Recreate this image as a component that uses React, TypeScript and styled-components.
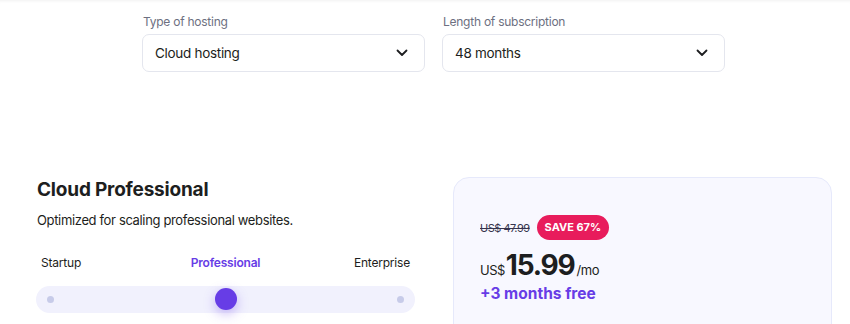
import styled, { createGlobalStyle } from "styled-components";

const GlobalStyle = createGlobalStyle`
  body {
    margin: 0;
    background: #ffffff;
    font-family: Inter, "Noto Sans", sans-serif;
    color: #1d1e20;
  }
`;

const Page = styled.div`
  width: 850px;
  height: 324px;
  overflow: hidden;
  box-shadow: inset 0 3px 3px -2px rgba(0, 0, 0, 0.06);
`;

const Filters = styled.div`
  display: flex;
  gap: 17px;
  padding: 14px 0 0 142px;
`;

const Field = styled.div`
  width: 283px;
  display: flex;
  flex-direction: column;
  gap: 4px;
`;

const Label = styled.span`
  font-size: 12px;
  letter-spacing: -0.25px;
  color: #6d7081;
  padding-left: 1px;
  line-height: 16px;
`;

const Select = styled.div`
  height: 38px;
  box-sizing: border-box;
  border: 1px solid #e4e6ee;
  border-radius: 7px;
  display: flex;
  align-items: center;
  justify-content: space-between;
  padding: 0 16px 0 12px;
  font-size: 13.5px;
  letter-spacing: -0.3px;
  color: #1d1e20;
`;

const Plan = styled.div`
  display: flex;
  gap: 38px;
  padding: 106px 0 0 36px;
`;

const Info = styled.div`
  width: 379px;
`;

const Title = styled.h2`
  margin: 0 0 0 1px;
  font-size: 19px;
  font-weight: 700;
  line-height: 24px;
  letter-spacing: -0.2px;
`;

const Subtitle = styled.p`
  margin: 9px 0 0 1px;
  font-size: 13px;
  letter-spacing: -0.35px;
  line-height: 18px;
  color: #1d1e20;
`;

const Tiers = styled.div`
  display: grid;
  grid-template-columns: 1fr auto 1fr;
  padding: 0 5px;
  margin-top: 26px;
`;

const Tier = styled.span<{ $active?: boolean; $align?: string }>`
  font-size: 12px;
  line-height: 16px;
  letter-spacing: -0.2px;
  text-align: ${(p) => p.$align || "center"};
  font-weight: ${(p) => (p.$active ? 600 : 400)};
  color: ${(p) => (p.$active ? "#673de6" : "#1d1e20")};
`;

const Track = styled.div`
  position: relative;
  margin-top: 15px;
  height: 27px;
  border-radius: 14px;
  background: #f1f1fd;
  display: flex;
  align-items: center;
  justify-content: space-between;
  padding: 0 11px;
`;

const Dot = styled.span`
  width: 7px;
  height: 7px;
  border-radius: 50%;
  background: #c7cbe9;
`;

const Thumb = styled.span`
  position: absolute;
  left: 179px;
  top: 2px;
  width: 22px;
  height: 22px;
  border-radius: 50%;
  background: #673de6;
  box-shadow: 0 4px 12px rgba(103, 61, 230, 0.35);
`;

const Card = styled.div`
  width: 379px;
  height: 180px;
  box-sizing: border-box;
  margin-top: -1px;
  border: 1px solid #e6e9fb;
  border-radius: 16px;
  background: #f8f8ff;
  padding: 37px 26px;
`;

const OldRow = styled.div`
  display: flex;
  align-items: center;
  gap: 7px;
`;

const OldPrice = styled.s`
  font-size: 11px;
  letter-spacing: -0.5px;
  color: #36344d;
`;

const Badge = styled.span`
  background: #e81c5c;
  color: #ffffff;
  font-size: 11px;
  font-weight: 700;
  line-height: 25px;
  padding: 0 8px;
  border-radius: 13px;
`;

const PriceRow = styled.div`
  display: flex;
  align-items: baseline;
  margin-top: 8px;
  height: 36px;
`;

const Currency = styled.span`
  font-size: 13px;
  letter-spacing: -0.5px;
  margin-right: 1px;
`;

const Amount = styled.span`
  font-size: 28px;
  font-weight: 700;
  letter-spacing: -1.2px;
`;

const Per = styled.span`
  font-size: 13px;
  letter-spacing: -0.4px;
  margin-left: 2px;
`;

const Free = styled.div`
  color: #673de6;
  font-size: 15.5px;
  font-weight: 700;
  line-height: 20px;
`;

const Chevron = () => (
  <svg width="12" height="8" viewBox="0 0 12 8" fill="none">
    <path d="M1.5 1.5L6 6l4.5-4.5" stroke="#1d1e20" strokeWidth="1.8" strokeLinecap="round" strokeLinejoin="round" />
  </svg>
);

export default function App() {
  return (
    <Page>
      <GlobalStyle />
      <Filters>
        <Field>
          <Label>Type of hosting</Label>
          <Select>
            Cloud hosting
            <Chevron />
          </Select>
        </Field>
        <Field>
          <Label>Length of subscription</Label>
          <Select>
            48 months
            <Chevron />
          </Select>
        </Field>
      </Filters>
      <Plan>
        <Info>
          <Title>Cloud Professional</Title>
          <Subtitle>Optimized for scaling professional websites.</Subtitle>
          <Tiers>
            <Tier $align="left">Startup</Tier>
            <Tier $active>Professional</Tier>
            <Tier $align="right">Enterprise</Tier>
          </Tiers>
          <Track>
            <Dot />
            <Thumb />
            <Dot />
          </Track>
        </Info>
        <Card>
          <OldRow>
            <OldPrice>US$ 47.99</OldPrice>
            <Badge>SAVE 67%</Badge>
          </OldRow>
          <PriceRow>
            <Currency>US$</Currency>
            <Amount>15.99</Amount>
            <Per>/mo</Per>
          </PriceRow>
          <Free>+3 months free</Free>
        </Card>
      </Plan>
    </Page>
  );
}
